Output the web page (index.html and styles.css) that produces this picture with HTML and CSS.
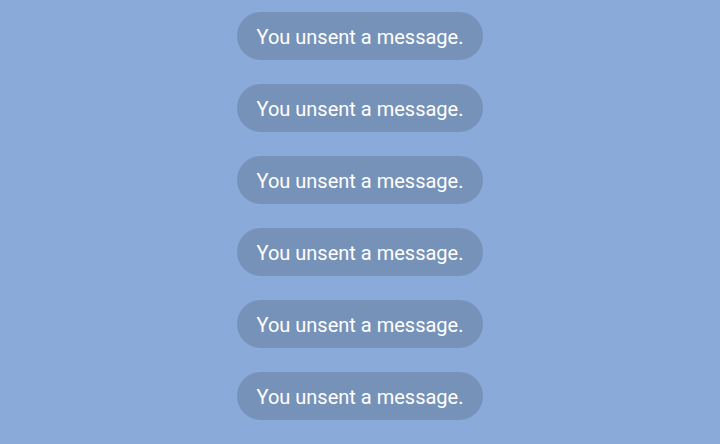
FILE: index.html
```html
<!DOCTYPE html>
<html lang="en">
  <head>
    <meta charset="UTF-8" />
    <meta name="viewport" content="width=device-width, initial-scale=1.0" />
    <title>Chat</title>
    <link rel="stylesheet" href="styles.css">
  </head>
  <body>
    <div class="chat">
      <div class="notice">You unsent a message.</div>
      <div class="notice">You unsent a message.</div>
      <div class="notice">You unsent a message.</div>
      <div class="notice">You unsent a message.</div>
      <div class="notice">You unsent a message.</div>
      <div class="notice">You unsent a message.</div>
    </div>
  </body>
</html>
```

FILE: styles.css
```css
* {
  margin: 0;
  padding: 0;
  box-sizing: border-box;
  font-family: Roboto, "Liberation Sans", sans-serif;
}
body {
  min-height: 100vh;
  background: #8aaad9;
}
.chat {
  display: flex;
  flex-direction: column;
  align-items: center;
  gap: 24px;
  padding: 12px 0;
}
.notice {
  height: 48px;
  line-height: 46px;
  padding: 2px 20px 0 20px;
  border-radius: 24px;
  background-color: #7792b8;
  color: #ffffff;
  font-size: 20px;
  white-space: nowrap;
}
```
